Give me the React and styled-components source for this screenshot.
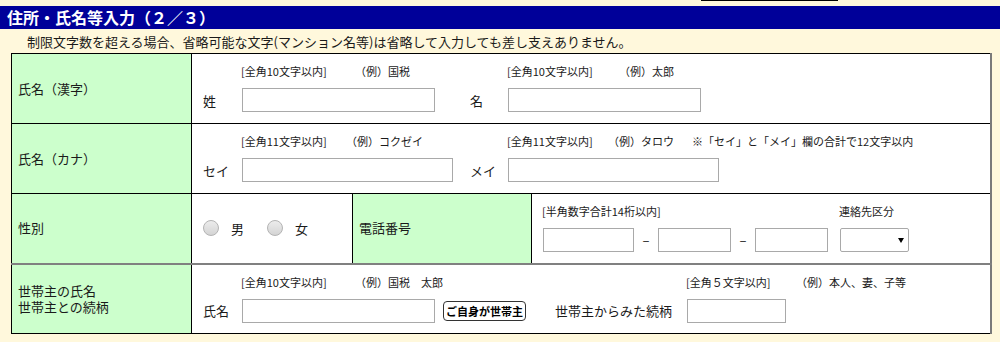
import styled, { createGlobalStyle } from 'styled-components';

const GlobalStyle = createGlobalStyle`
  body {
    margin: 0;
    background: #fff8dc;
    font-family: "Noto Sans CJK JP", "Noto Sans", sans-serif;
    color: #1a1a1a;
  }
`;

const Page = styled.div`
  width: 1000px;
  height: 342px;
  overflow: hidden;
  background: #fff8dc;
`;

const TopStrip = styled.div`
  height: 6px;
`;

const TopLine = styled.div`
  margin-left: 701px;
  width: 137px;
  height: 1px;
  background: #000;
`;

const Heading = styled.h1`
  margin: 0;
  height: 23px;
  line-height: 23px;
  padding-left: 7px;
  background: #000099;
  color: #fff;
  font-size: 16px;
  font-weight: bold;
`;

const Note = styled.p`
  margin: 0;
  padding: 4px 0 2px 27px;
  font-size: 13px;
  line-height: 18px;
`;

const FormTable = styled.table`
  margin-left: 11px;
  width: 981px;
  table-layout: fixed;
  border-collapse: collapse;
  border-top: 1px solid #000;
  border-left: 1px solid #000;
  border-bottom: 1px solid #000;
  border-right: 2px solid #7a7a7a;
`;

const Row = styled.tr`
  height: 70px;

  & > td {
    border-bottom: ${(p) => (p.$sep ? '2px solid #808080' : '1px solid #000')};
  }
`;

const LabelCell = styled.td`
  border: 1px solid #000;
  background: #ccffcc;
  padding: 0 6px;
  font-size: 13px;
  line-height: 16px;
  vertical-align: middle;
`;

const FieldCell = styled.td`
  border: 1px solid #000;
  background: #fff;
  padding: ${(p) => (p.$middle ? '0 11px' : '9px 11px 0')};
  vertical-align: ${(p) => (p.$middle ? 'middle' : 'top')};
`;

const FieldLine = styled.div`
  display: grid;
  grid-template-columns: ${(p) => p.$cols};
  align-items: start;
`;

const Field = styled.div`
  display: grid;
  grid-template-columns: ${(p) => (p.$labelW ? `${p.$labelW}px auto` : 'auto')};
  grid-template-rows: 16px 24px;
  row-gap: 9px;
  align-items: center;
  justify-content: start;
`;

const HintRow = styled.div`
  grid-column: ${(p) => (p.$full ? '1' : '2')};
  grid-row: 1;
  display: flex;
  font-size: 11px;
  line-height: 16px;
  white-space: nowrap;
  margin-left: -1px;
`;

const HintItem = styled.span`
  flex: ${(p) => (p.$w ? `0 0 ${p.$w}px` : '0 0 auto')};
`;

const FieldLabel = styled.span`
  grid-column: 1;
  grid-row: 2;
  font-size: 13px;
  white-space: nowrap;
`;

const Controls = styled.div`
  grid-column: ${(p) => (p.$full ? '1' : '2')};
  grid-row: 2;
  display: flex;
  align-items: center;
`;

const TextInput = styled.input`
  box-sizing: border-box;
  width: ${(p) => p.$w}px;
  height: 24px;
  margin: 0;
  padding: 0 3px;
  border: 1px solid #a9a9a9;
  background: #fff;
  font-size: 13px;
  font-family: inherit;
  outline: none;
`;

const Dash = styled.span`
  flex: 0 0 24px;
  text-align: center;
  font-size: 13px;
  line-height: 24px;
`;

const SelectBox = styled.span`
  position: relative;
  display: inline-block;

  &::after {
    content: '';
    position: absolute;
    right: 5px;
    top: 10px;
    border-left: 3.5px solid transparent;
    border-right: 3.5px solid transparent;
    border-top: 5px solid #000;
    pointer-events: none;
  }
`;

const Select = styled.select`
  appearance: none;
  box-sizing: border-box;
  display: block;
  width: 69px;
  height: 24px;
  margin: 0;
  border: 1px solid #a9a9a9;
  border-radius: 2px;
  background: #fff;
  font-family: inherit;
`;

const RadioGroup = styled.div`
  display: flex;
  align-items: center;
`;

const RadioLabel = styled.label`
  display: flex;
  align-items: center;
  gap: 12px;
  margin-right: 23px;
  font-size: 13px;
`;

const Radio = styled.input`
  appearance: none;
  box-sizing: border-box;
  width: 16px;
  height: 16px;
  margin: 0;
  border-radius: 50%;
  border: 1px solid #b4b4b4;
  background: linear-gradient(#ececec, #d4d4d4);
`;

const SelfButton = styled.button`
  margin-left: 8px;
  height: 20px;
  padding: 0 2px;
  border: 1px solid #333;
  border-radius: 4px;
  background: #fff;
  color: #000;
  font-family: inherit;
  font-size: 11px;
  font-weight: bold;
  line-height: 18px;
  white-space: nowrap;
`;

const Hints = ({ items }) => (
  <HintRow>
    {items.map(([text, w]) => (
      <HintItem key={text} $w={w}>
        {text}
      </HintItem>
    ))}
  </HintRow>
);

export default function App() {
  return (
    <Page>
      <GlobalStyle />
      <TopStrip>
        <TopLine />
      </TopStrip>
      <Heading>住所・氏名等入力（２／３）</Heading>
      <Note>
        制限文字数を超える場合、省略可能な文字(マンション名等)は省略して入力しても差し支えありません。
      </Note>

      <FormTable>
        <colgroup>
          <col style={{ width: 180 }} />
          <col style={{ width: 161 }} />
          <col style={{ width: 179 }} />
          <col />
        </colgroup>
        <tbody>
          <Row>
            <LabelCell>氏名（漢字）</LabelCell>
            <FieldCell colSpan={3}>
              <FieldLine $cols="267px auto">
                <Field $labelW={39}>
                  <Hints items={[['[全角10文字以内]', 114], ['（例）国税']]} />
                  <FieldLabel>姓</FieldLabel>
                  <Controls>
                    <TextInput $w={193} />
                  </Controls>
                </Field>
                <Field $labelW={38}>
                  <Hints items={[['[全角10文字以内]', 112], ['（例）太郎']]} />
                  <FieldLabel>名</FieldLabel>
                  <Controls>
                    <TextInput $w={193} />
                  </Controls>
                </Field>
              </FieldLine>
            </FieldCell>
          </Row>

          <Row>
            <LabelCell>氏名（カナ）</LabelCell>
            <FieldCell colSpan={3}>
              <FieldLine $cols="267px auto">
                <Field $labelW={39}>
                  <Hints items={[['[全角11文字以内]', 105], ['（例）コクゼイ']]} />
                  <FieldLabel>セイ</FieldLabel>
                  <Controls>
                    <TextInput $w={211} />
                  </Controls>
                </Field>
                <Field $labelW={38}>
                  <Hints
                    items={[
                      ['[全角11文字以内]', 101],
                      ['（例）タロウ', 84],
                      ['※「セイ」と「メイ」欄の合計で12文字以内'],
                    ]}
                  />
                  <FieldLabel>メイ</FieldLabel>
                  <Controls>
                    <TextInput $w={211} />
                  </Controls>
                </Field>
              </FieldLine>
            </FieldCell>
          </Row>

          <Row $sep>
            <LabelCell>性別</LabelCell>
            <FieldCell $middle>
              <RadioGroup>
                <RadioLabel>
                  <Radio type="radio" name="sex" />男
                </RadioLabel>
                <RadioLabel>
                  <Radio type="radio" name="sex" />女
                </RadioLabel>
              </RadioGroup>
            </FieldCell>
            <LabelCell>電話番号</LabelCell>
            <FieldCell>
              <FieldLine $cols="297px auto">
                <Field>
                  <HintRow $full>[半角数字合計14桁以内]</HintRow>
                  <Controls $full>
                    <TextInput $w={91} />
                    <Dash>–</Dash>
                    <TextInput $w={73} />
                    <Dash>–</Dash>
                    <TextInput $w={73} />
                  </Controls>
                </Field>
                <Field>
                  <HintRow $full>連絡先区分</HintRow>
                  <Controls $full>
                    <SelectBox>
                      <Select>
                        <option />
                      </Select>
                    </SelectBox>
                  </Controls>
                </Field>
              </FieldLine>
            </FieldCell>
          </Row>

          <Row>
            <LabelCell>
              世帯主の氏名
              <br />
              世帯主との続柄
            </LabelCell>
            <FieldCell colSpan={3}>
              <FieldLine $cols="352px auto">
                <Field $labelW={39}>
                  <Hints items={[['[全角10文字以内]', 114], ['（例）国税　太郎']]} />
                  <FieldLabel>氏名</FieldLabel>
                  <Controls>
                    <TextInput $w={193} />
                    <SelfButton type="button">ご自身が世帯主</SelfButton>
                  </Controls>
                </Field>
                <Field $labelW={132}>
                  <Hints items={[['[全角５文字以内]', 110], ['（例）本人、妻、子等']]} />
                  <FieldLabel>世帯主からみた続柄</FieldLabel>
                  <Controls>
                    <TextInput $w={99} />
                  </Controls>
                </Field>
              </FieldLine>
            </FieldCell>
          </Row>
        </tbody>
      </FormTable>
    </Page>
  );
}
